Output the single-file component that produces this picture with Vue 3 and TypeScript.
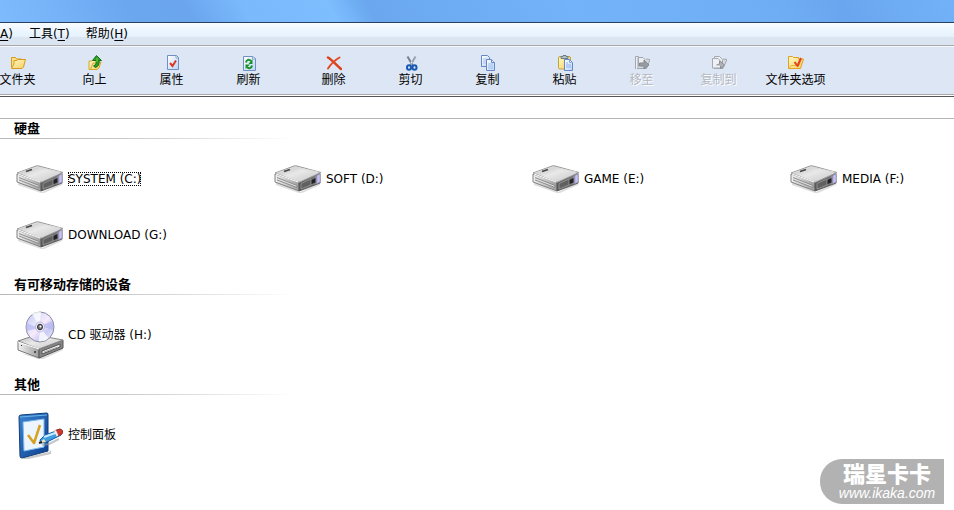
<script setup lang="ts">
interface Tool {
  id: string
  label: string
  disabled?: boolean
  gap?: boolean
}
interface Entry {
  label: string
  icon: 'drive' | 'cd' | 'panel'
  focused?: boolean
}
interface Group {
  title: string
  entries: Entry[]
}

const menus = [
  { text: '', key: 'A', open: '' },
  { text: '工具', key: 'T', open: '(' },
  { text: '帮助', key: 'H', open: '(' },
]

const tools: Tool[] = [
  { id: 'folder', label: '文件夹' },
  { id: 'up', label: '向上' },
  { id: 'props', label: '属性' },
  { id: 'refresh', label: '刷新' },
  { id: 'delete', label: '删除', gap: true },
  { id: 'cut', label: '剪切' },
  { id: 'copy', label: '复制' },
  { id: 'paste', label: '粘贴' },
  { id: 'move', label: '移至', disabled: true },
  { id: 'copyto', label: '复制到', disabled: true },
  { id: 'options', label: '文件夹选项' },
]

const groups: Group[] = [
  {
    title: '硬盘',
    entries: [
      { label: 'SYSTEM (C:)', icon: 'drive', focused: true },
      { label: 'SOFT (D:)', icon: 'drive' },
      { label: 'GAME (E:)', icon: 'drive' },
      { label: 'MEDIA (F:)', icon: 'drive' },
      { label: 'DOWNLOAD (G:)', icon: 'drive' },
    ],
  },
  { title: '有可移动存储的设备', entries: [{ label: 'CD 驱动器 (H:)', icon: 'cd' }] },
  { title: '其他', entries: [{ label: '控制面板', icon: 'panel' }] },
]
</script>

<template>
  <div class="window">
    <svg class="defs" width="0" height="0" aria-hidden="true">
      <defs>
        <linearGradient id="yellow" x1="0" y1="0" x2="1" y2="1">
          <stop offset="0" stop-color="#fff9c4" /><stop offset="1" stop-color="#f5cf62" />
        </linearGradient>
        <linearGradient id="paper" x1="0" y1="0" x2="1" y2="1">
          <stop offset="0" stop-color="#ffffff" /><stop offset="1" stop-color="#b9d5f8" />
        </linearGradient>
        <linearGradient id="metalTop" x1="0" y1="0" x2="1" y2="1">
          <stop offset="0" stop-color="#b4b4b4" /><stop offset=".45" stop-color="#e9e9e9" /><stop offset="1" stop-color="#c4c4c4" />
        </linearGradient>
        <linearGradient id="metalFront" x1="0" y1="0" x2="1" y2="0">
          <stop offset="0" stop-color="#f2f2f2" /><stop offset="1" stop-color="#9d9d9d" />
        </linearGradient>
        <linearGradient id="metalSide" x1="0" y1="0" x2="1" y2="0">
          <stop offset="0" stop-color="#555" /><stop offset=".7" stop-color="#777" /><stop offset="1" stop-color="#b9b6ea" />
        </linearGradient>
        <linearGradient id="disc" x1="0" y1="0" x2="1" y2="1">
          <stop offset="0" stop-color="#c5c6f4" /><stop offset=".35" stop-color="#e4e4fc" /><stop offset=".5" stop-color="#f8eafb" /><stop offset=".7" stop-color="#c9c9f6" /><stop offset="1" stop-color="#f2f2ff" />
        </linearGradient>
        <linearGradient id="frame" x1="0" y1="0" x2="1" y2="1">
          <stop offset="0" stop-color="#3c83d0" /><stop offset="1" stop-color="#0b3f8e" />
        </linearGradient>
      </defs>
    </svg>

    <div class="titlebar"></div>

    <nav class="menubar">
      <button v-for="m in menus" :key="m.key" type="button">{{ m.text }}{{ m.open }}<u>{{ m.key }}</u>)</button>
    </nav>

    <div class="toolbar" role="toolbar">
      <button
        v-for="t in tools"
        :key="t.id"
        type="button"
        class="tool"
        :class="{ gap: t.gap }"
        :disabled="t.disabled"
      >
        <svg width="16" height="16" viewBox="0 0 16 16" aria-hidden="true">
          <g v-if="t.id === 'folder'" stroke="#d79a20" stroke-linejoin="round">
            <path d="M1.5 12.500V2.500h4l1 1.500h5v2.500" fill="#fbe287" />
            <path d="M1.500 13.500 4 9V5.500h3l1-1h7.500l-2 7.500-1.500 1.500z" fill="url(#yellow)" />
          </g>
          <g v-else-if="t.id === 'up'" stroke-linejoin="round">
            <path d="M2 14.500V6h3l1-1h6v2h2l-2 6-2 1.500z" fill="url(#yellow)" stroke="#d9a62c" />
            <path d="M3.500 14.500 6 8h3" fill="none" stroke="#d9a62c" />
            <path d="M9.500.500 14.500 5.500 12 5.500C12.500 9 11.500 11.500 8.500 12.500L6.500 11C9 10 9.500 8 9 5.500L5.500 5.500z" fill="#2f9d20" stroke="#136f16" />
            <path d="M10 3v4" stroke="#6ed052" />
          </g>
          <g v-else-if="t.id === 'props'">
            <path d="M3.500.500h9l2 2v12h-11z" fill="url(#paper)" stroke="#718fc2" />
            <path d="M12 1v2h2" fill="#fff" stroke="#8aa4d0" />
            <path d="m6 8 2.500 3L12 5.500" fill="none" stroke="#dc3a20" stroke-width="2" />
          </g>
          <g v-else-if="t.id === 'refresh'">
            <path d="M2.500 1.500h9l3 2v12h-12z" fill="url(#paper)" stroke="#718fc2" />
            <path d="M11.500 2v2h2.500" fill="#fff" stroke="#8aa4d0" />
            <path d="M5 7.500C5.500 4.500 8 4 10 6M11 10.500C10.500 13.500 7.500 14 6 12" fill="none" stroke="#199126" stroke-width="2" />
            <path d="M11.500 4v5H7.500zM4.500 14V9.500H9z" fill="#199126" />
          </g>
          <g v-else-if="t.id === 'delete'" fill="none" stroke-linecap="round">
            <path d="M2 2.500C6 5 10.500 10 15 14" stroke="#dc421f" stroke-width="2.500" />
            <path d="M13.500 2.500C9 5 5 9 2 13.500" stroke="#e34822" stroke-width="2" />
          </g>
          <g v-else-if="t.id === 'cut'" fill="none">
            <path d="M4.500 1.500 10 11" stroke="#75818f" stroke-width="2" />
            <path d="M12.500 1.500 7 11" stroke="#98a4b0" stroke-width="2" />
            <circle cx="8.500" cy="7.500" r=".800" fill="#fff" />
            <ellipse cx="6" cy="12.500" rx="2" ry="2.200" stroke="#1758b3" stroke-width="2" />
            <ellipse cx="11.500" cy="12.500" rx="2" ry="2.200" stroke="#1758b3" stroke-width="2" />
          </g>
          <g v-else-if="t.id === 'copy'" fill="url(#paper)" stroke="#6687c4">
            <path d="M1.500.500h6l2 2v9h-8z" /><path d="M3 4h4M3 6h4M3 8h3" stroke="#a9c2ec" />
            <path d="M6.500 4.500h5l3 3v8h-8z" /><path d="M11.500 5v2.500h3" fill="#fff" />
            <path d="M8 9h5M8 11h5M8 13h5" stroke="#9bbaf0" />
          </g>
          <g v-else-if="t.id === 'paste'">
            <rect x="1.500" y="1.500" width="12" height="12.500" rx="1.500" fill="url(#yellow)" stroke="#c3a238" />
            <path d="M4 3.500V1.500h2V.500h3v1h2v2z" fill="#b7c1ca" stroke="#687c86" />
            <path d="M7.500 4.500h5l3 3v8h-8z" fill="url(#paper)" stroke="#6486c4" />
            <path d="M12.500 5v2.500h2" fill="#fff" stroke="#88a5d7" />
            <path d="M9 8h2M9 10h5M9 12h5" stroke="#8db1e9" />
          </g>
          <g v-else-if="t.id === 'move'" stroke="#a3a7af" stroke-linejoin="round">
            <path d="M1.500 14V1.500h3v11M4 2.500h5l3 3V13H4z" fill="#eceef1" />
            <path d="m12 4 4 .500-3.500 9H3" fill="#d4d7dc" />
            <path d="M5.500 8H10V5l5 5-5 4v-3H5.500z" fill="#989ca3" stroke="#858990" />
          </g>
          <g v-else-if="t.id === 'copyto'" stroke="#a4a8b0" stroke-linejoin="round">
            <path d="m12 4 4 .500-4 9H3" fill="#d5d8dd" />
            <path d="M1.500 3.500h2v-2h5l3 3V13h-10z" fill="#eff0f3" />
            <path d="M4 3.500h3l3 3V13" fill="none" />
            <path d="m5.500 10 3-1V6l5 4-4 3.500V11" fill="#afb2b9" stroke="#8a8e96" />
          </g>
          <g v-else stroke-linejoin="round">
            <path d="M.500 13.500V1.500h4l1 1h5V4h5l-3 9.500z" fill="url(#yellow)" stroke="#e2a022" />
            <path d="m1 13.500 2-3h8l2-5.500" fill="none" stroke="#e9b138" />
            <path d="m6.500 7 3 4L13 3" fill="none" stroke="#e44320" stroke-width="2" />
          </g>
        </svg>
        <span>{{ t.label }}</span>
      </button>
    </div>

    <div class="spacer"></div>

    <main>
      <section v-for="g in groups" :key="g.title">
        <h2>{{ g.title }}</h2>
        <div class="items">
          <a v-for="e in g.entries" :key="e.label" href="#" class="item">
            <svg width="48" height="48" viewBox="0 0 48 48" aria-hidden="true">
              <g v-if="e.icon === 'drive'" stroke-linejoin="round">
                <path d="m2 27 24 10 21-10-1 3-18 8-3 0L2 30z" fill="#cfcfcf" opacity=".7" />
                <path d="M1 19v8l24 9v-9z" fill="url(#metalFront)" stroke="#808080" />
                <path d="M25 27v9l21-8v-9.500z" fill="url(#metalSide)" stroke="#5c5c5c" />
                <path d="m1 18 19-7q1-.500 3 0l24 6.500L26 27q-1 .500-2 0z" fill="url(#metalTop)" stroke="#9a9a9a" />
                <path d="m3 18 18-6 23 5" fill="none" stroke="#dcdcdc" />
                <path d="m10 16.500 6-2" stroke="#444" stroke-width="1.500" />
                <path d="m2 19 22 8" fill="none" stroke="#fff" />
                <path d="m3 22.500 20 8v2L3 25" fill="#ddd" stroke="#7c7c7c" stroke-width=".800" />
                <path d="m27 28.500 10-4.500v6L27 34z" fill="#606060" stroke="#8f8f8f" />
                <path d="m37.500 25 4-2v4.500l-4 1.500z" fill="#222" />
                <path d="m43 20.500 3-1.500v8l-3 1.500z" fill="#c5c1f1" stroke="#8f8bb5" stroke-width=".500" />
              </g>
              <g v-else-if="e.icon === 'cd'" stroke-linejoin="round">
                <path d="m4 42 21 7 22-10-1-3-21 10z" fill="#ccc" opacity=".7" />
                <path d="M2 30v9l21 8v-9z" fill="url(#metalFront)" stroke="#777" />
                <path d="M23 38v9l24-10v-8z" fill="#868686" stroke="#555" />
                <path d="m2 30 18-6 27 5-24 9z" fill="url(#metalTop)" stroke="#888" />
                <path d="m2 31 21 7" stroke="#fff" />
                <path d="m26 40 18-7v3l-18 7z" fill="#eee" stroke="#555" />
                <path d="m28 41 14-5" stroke="#aaa" /><circle cx="19" cy="41" r="1" fill="#333" />
                <path d="m5 34 1 1" stroke="#333" />
                <ellipse cx="24" cy="16" rx="14" ry="15" fill="url(#disc)" stroke="#8a8aa0" />
                <path d="M23.500 15 16 3q4-3 9-2zM24.500 17l8 10q-4 4-10 3z" fill="#fff" opacity=".75" />
                <path d="M24.500 15 36 10q2 5 1 9zM22.500 17 10.500 20q-1-4 0-8z" fill="#aeb0ef" opacity=".6" />
                <ellipse cx="24" cy="16" rx="4.500" ry="5" fill="#ecebff" stroke="#bbb9db" />
                <ellipse cx="24" cy="16" rx="2.500" ry="2.800" fill="#777" stroke="#333" />
                <circle cx="24.500" cy="15.500" r="1" fill="#fff" />
              </g>
              <g v-else stroke-linejoin="round">
                <path d="m7 47 26-6 2-2v4L8 49z" fill="#bbb" opacity=".8" />
                <path d="M3 6q0-2 2-2l26-2q1 0 1 2v36L6 47q-2 0-2-2z" fill="url(#frame)" stroke="#123d78" />
                <path d="M4 6 31 4" stroke="#68b7ee" />
                <path d="m7 11 21-3v28L8 40z" fill="#edf5ff" stroke="#7cb8ee" />
                <path d="m12 24 6 8L24 14" fill="none" stroke="#d7a020" stroke-width="2.500" />
                <path d="m26 34 7-1 10-5" fill="none" stroke="#9aa3ad" stroke-width="2" opacity=".6" />
                <path d="m24 29 5-5 14-5 2 5-14 7-6 1z" fill="#409ddd" stroke="#17589f" />
                <path d="m28 26 14-5" stroke="#c5edff" stroke-width="2" />
                <path d="m24 31 4-3 2 3-6 1z" fill="#f5e2b7" />
                <path d="m23 32 3-1" stroke="#222" stroke-width="2" />
                <path d="m39 19.500 5-1.500q4 1 2 5l-4 2z" fill="#d1382c" stroke="#8e2821" />
                <path d="m39 19.500 2.500 5.500" stroke="#eee" stroke-width="2" />
              </g>
            </svg>
            <span :class="{ focused: e.focused }">{{ e.label }}</span>
          </a>
        </div>
      </section>
    </main>

    <div class="watermark">
      <strong>瑞星卡卡</strong>
      <em>www.ikaka.com</em>
    </div>
  </div>
</template>

<style>
body {
  background: #fff;
}
</style>

<style scoped>
.window {
  position: relative;
  min-height: 100vh;
  overflow: hidden;
  font: 12px/16px "DejaVu Sans", "Noto Sans CJK SC", sans-serif;
  color: #000;
}
.defs {
  position: absolute;
}
.titlebar {
  height: 22px;
  border-bottom: 1px solid #27425f;
  background: linear-gradient(60deg, #7dbbfd 0%, #75b2f7 7%, #6ba7ef 14%, #6aa5ee 20%, #7ab9fc 26%, #7dbeff 35%, #6aa7ee 39%, #6dabf2 46%, #73b3fa 60%, #6faef5 80%, #6aa6ef 88%, #72b2f8 100%);
}
button {
  padding: 0;
  border: 0;
  background: none;
  font: inherit;
  color: inherit;
}
.menubar {
  display: flex;
  gap: 16px;
  height: 22px;
  border-bottom: 1px solid #a9a9a9;
  background: linear-gradient(to bottom, #f9fdff 0, #e4f1fd 14px, #dbe4f1 14px, #dbe4f1 100%);
}
.menubar u {
  text-underline-offset: 2px;
}
.toolbar {
  display: flex;
  height: 47px;
  margin-left: -21px;
  border-top: 1px solid #f5f8fc;
  border-bottom: 1px solid #a9a9a9;
  background: #dde6f4;
}
.tool {
  display: flex;
  flex: none;
  flex-direction: column;
  align-items: center;
  gap: 1px;
  width: 77px;
  padding-top: 8px;
  white-space: nowrap;
}
.tool.gap {
  margin-left: 8px;
}
.tool:disabled {
  color: #b3b8c1;
  text-shadow: 1px 1px 0 #fff;
}
.spacer {
  height: 21px;
  margin-top: 1px;
  border-top: 1px solid #55565a;
  border-bottom: 1px solid #b5b5b5;
}
h2 {
  display: flex;
  align-items: flex-end;
  height: 34px;
  margin: 0;
  padding: 0 0 2px 14px;
  font-size: 13px;
  line-height: 16px;
  background: linear-gradient(to right, #b8b8b8, #c8c8c8 120px, #fff 295px) bottom / 100% 1px no-repeat;
}
section:first-child h2 {
  height: 18px;
}
.items {
  display: grid;
  grid-template-columns: repeat(auto-fill, 150px);
  gap: 8px 108px;
  padding: 16px 0 0 16px;
}
.item {
  display: flex;
  align-items: center;
  gap: 4px;
  color: inherit;
  text-decoration: none;
  white-space: nowrap;
}
.item svg {
  flex: none;
}
.focused {
  line-height: 14px;
  outline: 1px dotted #000;
  outline-offset: -1px;
}
.watermark {
  position: absolute;
  right: 10px;
  bottom: 6px;
  display: flex;
  flex-direction: column;
  align-items: center;
  box-sizing: border-box;
  width: 124px;
  height: 45px;
  padding: 5px 0 0 10px;
  border-radius: 22px 0 0 22px;
  background: #b2b2b2;
  color: #fff;
}
.watermark strong {
  font-size: 22px;
  line-height: 22px;
  font-weight: 900;
}
.watermark em {
  font: italic 14px/14px "Liberation Sans", sans-serif;
}
</style>
